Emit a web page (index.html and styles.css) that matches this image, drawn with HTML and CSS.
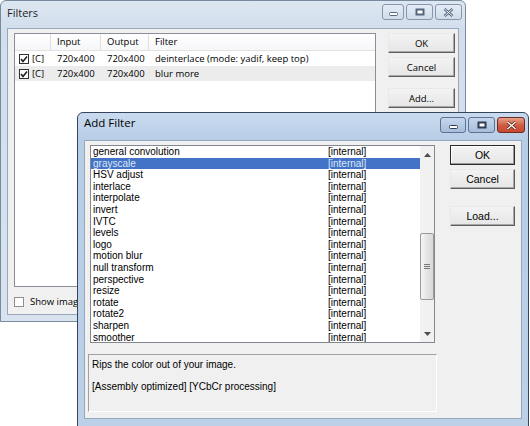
FILE: index.html
```html
<!DOCTYPE html>
<html lang="en">
<head>
  <meta charset="UTF-8" />
  <meta name="viewport" content="width=device-width, initial-scale=1.0" />
  <title>Filters</title>
  <link rel="stylesheet" href="styles.css">
</head>
<body>
  <div class="desktop">
    <!-- Filters (inactive, behind) -->
    <div class="window filters">
      <div class="titlebar">
        <span class="title">Filters</span>
        <div class="caption">
          <span class="cap-btn min"><svg width="9" height="4" viewBox="0 0 9 4"><rect x="0.5" y="0.5" width="8" height="3" rx="1" fill="#fff" stroke="#56657a"/></svg></span>
          <span class="cap-btn max"><svg width="10" height="8" viewBox="0 0 10 8"><rect x="0.5" y="0.5" width="9" height="7" fill="#56657a"/><rect x="2.5" y="2.5" width="5" height="3" fill="#fff"/></svg></span>
          <span class="cap-btn close"><svg width="11" height="9" viewBox="0 0 11 9"><path d="M1.5 1 L9.5 8 M9.5 1 L1.5 8" stroke="#56657a" stroke-width="2.6"/><path d="M1.5 1 L9.5 8 M9.5 1 L1.5 8" stroke="#fff" stroke-width="0.9"/></svg></span>
        </div>
      </div>
      <div class="client">
        <div class="main">
          <div class="listview">
            <div class="lv-head">
              <span class="col c0"></span>
              <span class="col c1">Input</span>
              <span class="col c2">Output</span>
              <span class="col c3">Filter</span>
            </div>
            <div class="lv-row">
              <span class="col c0"><span class="check"><svg width="10" height="10" viewBox="0 0 10 10"><path d="M2 5 L4 7.5 L8 2.5" fill="none" stroke="#222" stroke-width="1.6"/></svg></span>[C]</span>
              <span class="col c1">720x400</span>
              <span class="col c2">720x400</span>
              <span class="col c3">deinterlace (mode: yadif, keep top)</span>
            </div>
            <div class="lv-row sel">
              <span class="col c0"><span class="check"><svg width="10" height="10" viewBox="0 0 10 10"><path d="M2 5 L4 7.5 L8 2.5" fill="none" stroke="#222" stroke-width="1.6"/></svg></span>[C]</span>
              <span class="col c1">720x400</span>
              <span class="col c2">720x400</span>
              <span class="col c3">blur more</span>
            </div>
          </div>
          <div class="buttons">
            <button class="btn">OK</button>
            <button class="btn">Cancel</button>
            <button class="btn spaced">Add...</button>
          </div>
        </div>
        <label class="opt"><span class="check"></span><span class="opt-text">Show image formats</span></label>
      </div>
    </div>

    <!-- Add Filter (active, in front) -->
    <div class="window addfilter">
      <div class="titlebar">
        <span class="title">Add Filter</span>
        <div class="caption">
          <span class="cap-btn min"><svg width="9" height="4" viewBox="0 0 9 4"><rect x="0.5" y="0.5" width="8" height="3" rx="1" fill="#fff" stroke="#2e3d52"/></svg></span>
          <span class="cap-btn max"><svg width="10" height="8" viewBox="0 0 10 8"><rect x="0.5" y="0.5" width="9" height="7" fill="#2e3d52"/><rect x="2.5" y="2.5" width="5" height="3" fill="#fff"/></svg></span>
          <span class="cap-btn close"><svg width="11" height="9" viewBox="0 0 11 9"><path d="M1.5 1 L9.5 8 M9.5 1 L1.5 8" stroke="#5a1d14" stroke-width="2.8"/><path d="M1.5 1 L9.5 8 M9.5 1 L1.5 8" stroke="#fff" stroke-width="1.4"/></svg></span>
        </div>
      </div>
      <div class="client">
        <div class="main">
          <div class="listbox">
            <div class="items">
              <div class="item"><span>general convolution</span><span>[internal]</span></div>
              <div class="item sel"><span>grayscale</span><span>[internal]</span></div>
              <div class="item"><span>HSV adjust</span><span>[internal]</span></div>
              <div class="item"><span>interlace</span><span>[internal]</span></div>
              <div class="item"><span>interpolate</span><span>[internal]</span></div>
              <div class="item"><span>invert</span><span>[internal]</span></div>
              <div class="item"><span>IVTC</span><span>[internal]</span></div>
              <div class="item"><span>levels</span><span>[internal]</span></div>
              <div class="item"><span>logo</span><span>[internal]</span></div>
              <div class="item"><span>motion blur</span><span>[internal]</span></div>
              <div class="item"><span>null transform</span><span>[internal]</span></div>
              <div class="item"><span>perspective</span><span>[internal]</span></div>
              <div class="item"><span>resize</span><span>[internal]</span></div>
              <div class="item"><span>rotate</span><span>[internal]</span></div>
              <div class="item"><span>rotate2</span><span>[internal]</span></div>
              <div class="item"><span>sharpen</span><span>[internal]</span></div>
              <div class="item"><span>smoother</span><span>[internal]</span></div>
            </div>
            <div class="vscroll">
              <div class="arrow"><svg width="7" height="4" viewBox="0 0 7 4"><path d="M0 4 L3.5 0 L7 4Z" fill="#4d4d4d"/></svg></div>
              <div class="track">
                <div class="thumb"><svg width="6" height="7" viewBox="0 0 6 7"><path d="M0 1.5 H6 M0 3.5 H6 M0 5.5 H6" stroke="#777" stroke-width="1"/></svg></div>
              </div>
              <div class="arrow"><svg width="7" height="4" viewBox="0 0 7 4"><path d="M0 0 L3.5 4 L7 0Z" fill="#4d4d4d"/></svg></div>
            </div>
          </div>
          <div class="buttons">
            <button class="btn default">OK</button>
            <button class="btn">Cancel</button>
            <button class="btn spaced">Load...</button>
          </div>
        </div>
        <div class="desc">
          <p>Rips the color out of your image.</p>
          <p>[Assembly optimized] [YCbCr processing]</p>
        </div>
      </div>
    </div>
  </div>
</body>
</html>
```

FILE: styles.css
```css
body {
  margin: 0;
  background-color: #fff;
  font-family: "Open Sans", Arial, sans-serif;
  color: #000;
}
.desktop {
  position: relative;
  width: 530px;
  height: 426px;
  overflow: hidden;
}

/* window frames */
.window {
  position: absolute;
  box-sizing: border-box;
  display: flex;
  flex-direction: column;
  padding: 0 6px 6px;
  border: 1px solid;
  border-radius: 6px 6px 0 0;
}
.filters {
  left: 0;
  top: 0;
  width: 466px;
  height: 322px;
  border-color: #7a8a9e;
  background: linear-gradient(#dde7f2, #d2deec 28px, #d8e3ef);
}
.addfilter {
  left: 77px;
  top: 112px;
  width: 452px;
  height: 318px;
  padding-bottom: 10px;
  border-color: #34455c;
  background: linear-gradient(#c8daee, #b7cde6 28px, #bcd1e8);
}
.titlebar {
  flex: none;
  height: 27px;
  display: flex;
  justify-content: space-between;
  align-items: flex-start;
}
.title {
  padding-top: 5px;
  font-size: 11px;
  line-height: 14px;
  color: #1e1e1e;
}
.addfilter .title {
  padding-top: 3px;
  font-size: 11.5px;
  color: #000;
}
.caption {
  display: flex;
  gap: 2px;
  margin-top: 3px;
  margin-right: -3px;
}
.addfilter .caption {
  margin-top: 4px;
}
.cap-btn {
  box-sizing: border-box;
  height: 16px;
  width: 27px;
  display: flex;
  align-items: center;
  justify-content: center;
  border: 1px solid #8796aa;
  border-radius: 3px;
  background: linear-gradient(#e4ecf6, #d0dcea);
}
.cap-btn.min {
  width: 22px;
  align-items: flex-end;
  padding-bottom: 3px;
}
.addfilter .cap-btn {
  border-color: #5d7190;
  background: linear-gradient(#c6d7ec, #a6bedb);
}
.addfilter .cap-btn.min {
  width: 26px;
}
.addfilter .cap-btn.close {
  width: 28px;
  border-color: #6f2c22;
  background: linear-gradient(#e8a08a, #cf5a40 55%, #c84a32);
}
.client {
  flex: 1;
  box-sizing: border-box;
  background-color: #f0f0f0;
  border: 1px solid #97a8bc;
}
.filters .client {
  padding: 4px 0 0 6px;
}
.addfilter .client {
  padding: 4px 0 0 5px;
}
.main {
  display: flex;
  align-items: flex-start;
}

/* buttons */
.buttons {
  display: flex;
  flex-direction: column;
  gap: 4px;
}
.filters .buttons {
  margin-left: 12px;
}
.addfilter .buttons {
  margin-left: 15px;
}
.btn {
  box-sizing: border-box;
  width: 67px;
  height: 20px;
  padding: 0;
  font-family: "Open Sans", Arial, sans-serif;
  font-size: 9.5px;
  color: #000;
  background: linear-gradient(#f3f3f3, #e6e6e6);
  border: 1px solid;
  border-color: #e9e9e9 #5e5e5e #5e5e5e #e9e9e9;
  box-shadow: inset -1px -1px #a8a8a8;
  border-radius: 0;
}
.filters .btn.spaced {
  margin-top: 7px;
}
.addfilter .btn {
  width: 65px;
  font-family: "Liberation Sans", Arial, sans-serif;
  font-size: 10.5px;
}
.addfilter .btn.spaced {
  margin-top: 13px;
}
.btn.default {
  border-color: #2a2a2a;
  box-shadow: inset -1px -1px #9a9a9a, inset 1px 1px #fff;
}

/* filters list view */
.listview {
  box-sizing: border-box;
  width: 362px;
  height: 254px;
  background-color: #fff;
  border: 1px solid #8a8f97;
  font-size: 9.5px;
}
.lv-head, .lv-row {
  display: flex;
}
.lv-head {
  height: 16px;
  line-height: 16px;
  border-bottom: 1px solid #e2e2e2;
  background: linear-gradient(#fff, #f6f7f9);
}
.lv-row {
  height: 15px;
  line-height: 15px;
}
.lv-row.sel {
  background-color: #ececec;
}
.col {
  box-sizing: border-box;
  padding-left: 6px;
  white-space: nowrap;
}
.c0 { width: 36px; padding-left: 4px; display: flex; align-items: center; }
.c1 { width: 50px; }
.c2 { width: 48px; }
.c3 { flex: 1; }
.lv-head .c0, .lv-head .c1, .lv-head .c2 {
  border-right: 1px solid #dedede;
}
.check {
  box-sizing: border-box;
  display: inline-flex;
  width: 10px;
  height: 10px;
  margin-right: 3px;
  border: 1px solid #333;
  background-color: #fff;
}
.check svg {
  margin: -1px;
}
.opt {
  display: flex;
  align-items: center;
  gap: 6px;
  width: 63px;
  margin-top: 8px;
  font-size: 9.5px;
  white-space: nowrap;
}
.opt-text {
  overflow: hidden;
}
.opt .check {
  flex: none;
  border-color: #8e8f8f;
  margin-right: 0;
}

/* add filter list box */
.listbox {
  box-sizing: border-box;
  display: flex;
  width: 345px;
  height: 198px;
  background-color: #fff;
  border: 1px solid #828790;
  font-family: "Liberation Sans", Arial, sans-serif;
  font-size: 10px;
}
.items {
  flex: 1;
  overflow: hidden;
}
.item {
  display: grid;
  grid-template-columns: 235px 1fr;
  height: 11.6px;
  line-height: 11.6px;
  padding-left: 2px;
  white-space: nowrap;
}
.item.sel {
  background-color: #4373c6;
  color: #dce8f8;
}
.vscroll {
  width: 14px;
  display: flex;
  flex-direction: column;
  background-color: #f1f1f1;
}
.arrow {
  height: 17px;
  display: flex;
  align-items: center;
  justify-content: center;
}
.track {
  flex: 1;
}
.thumb {
  box-sizing: border-box;
  height: 67px;
  margin-top: 70px;
  display: flex;
  align-items: center;
  justify-content: center;
  border: 1px solid #9a9a9a;
  border-radius: 2px;
  background: linear-gradient(90deg, #f5f5f5, #e4e4e4 50%, #d8d8d8);
}

/* description */
.desc {
  box-sizing: border-box;
  width: 349px;
  height: 58px;
  margin: 11px 0 0 -2px;
  padding: 4px 3px;
  border: 1px solid;
  border-color: #a0a0a0 #fff #fff #a0a0a0;
  font-family: "Liberation Sans", Arial, sans-serif;
  font-size: 10px;
  line-height: 11px;
}
.desc p {
  margin: 0 0 11px;
}
```
